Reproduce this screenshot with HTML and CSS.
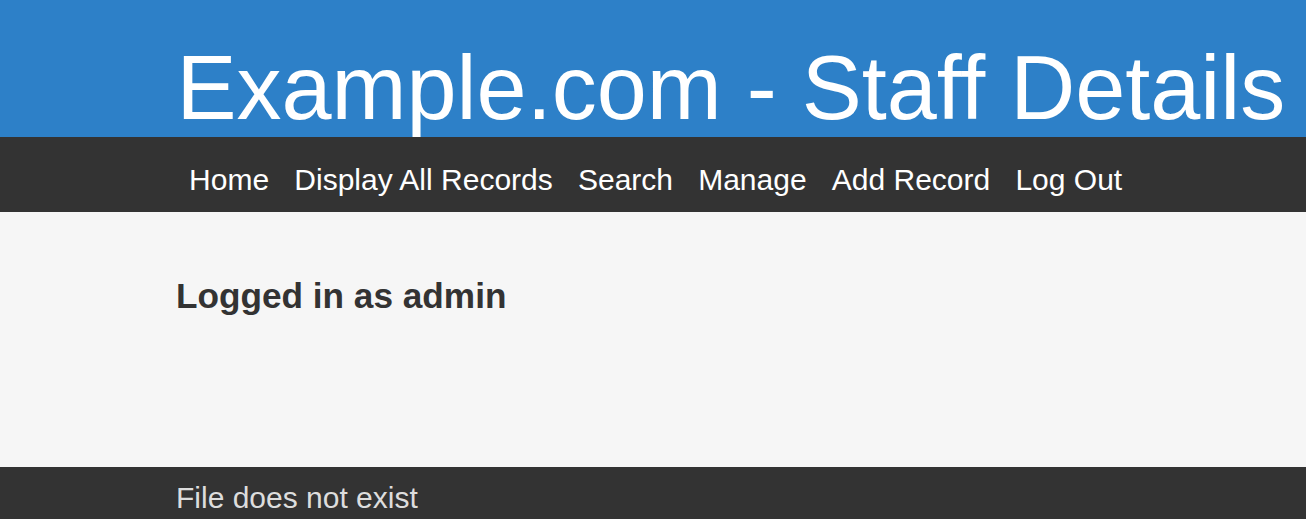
FILE: index.html
```html
<!DOCTYPE html>
<html lang="en">
<head>
<meta charset="utf-8">
<title>Example.com - Staff Details</title>
<link rel="stylesheet" href="styles.css">
</head>
<body>
<header class="site-header">
  <div class="wrap">
    <h1 class="site-title">Example.com - Staff Details</h1>
  </div>
</header>
<nav class="site-nav">
  <ul class="wrap nav-list">
    <li><a href="#">Home</a></li>
    <li><a href="#">Display All Records</a></li>
    <li><a href="#">Search</a></li>
    <li><a href="#">Manage</a></li>
    <li><a href="#">Add Record</a></li>
    <li><a href="#">Log Out</a></li>
  </ul>
</nav>
<main class="site-main">
  <div class="wrap">
    <h2 class="status">Logged in as admin</h2>
  </div>
</main>
<footer class="site-footer">
  <div class="wrap">
    <p class="footer-text">File does not exist</p>
  </div>
</footer>
</body>
</html>
```
FILE: styles.css
```css
html, body {
  margin: 0;
  padding: 0;
}
body {
  font-family: "Liberation Sans", Arial, sans-serif;
  background: #333333;
  color: #333333;
}
.wrap {
  padding-left: 176px;
  padding-right: 0;
}
.site-header {
  background: #2d80c8;
  height: 137px;
  overflow: hidden;
}
.site-header .wrap {
  padding-left: 176.5px;
}
.site-title {
  margin: 0;
  padding-top: 37px;
  font-size: 90px;
  font-weight: normal;
  line-height: 103px;
  color: #ffffff;
  white-space: nowrap;
}
.site-nav {
  background: #333333;
  height: 75px;
  box-sizing: border-box;
  padding-top: 25px;
}
.nav-list {
  list-style: none;
  margin: 0;
  display: flex;
  padding-left: 176.5px;
}
.nav-list a {
  display: block;
  padding: 0 12.6px;
  font-size: 30px;
  line-height: 35px;
  color: #ffffff;
  text-decoration: none;
}
.site-main {
  background: #f6f6f6;
  height: 255px;
  box-sizing: border-box;
  padding-top: 1px;
}
.status {
  margin: 0;
  margin-top: 63px;
  font-size: 35.2px;
  font-weight: bold;
  line-height: 40px;
  color: #333333;
}
.site-footer {
  background: #333333;
  height: 52px;
  overflow: hidden;
}
.footer-text {
  margin: 0;
  padding-top: 13px;
  font-size: 30px;
  line-height: 35px;
  color: #dddddd;
}
```
